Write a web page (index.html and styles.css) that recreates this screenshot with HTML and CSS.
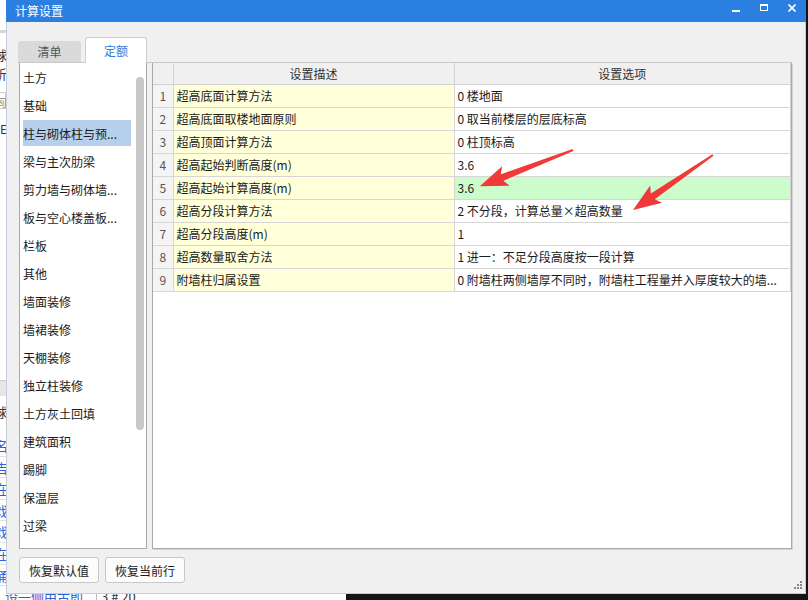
FILE: index.html
```html
<!DOCTYPE html>
<html>
<head>
<meta charset="utf-8">
<title>计算设置</title>
<link rel="stylesheet" href="styles.css">
</head>
<body>
<div class="desktop">
  <div class="bg-left">
    <div class="bgl-band"></div>
    <div class="bgl-txt t1">殏</div>
    <div class="bgl-txt t2">析</div>
    <div class="bgl-box">匈</div>
    <div class="bgl-txt t3">E</div>
    <div class="bgl-band b2"></div>
    <div class="bgl-txt t4">殏</div>
    <div class="bgl-blue">
      <div>名</div><div>吉</div><div>在</div><div>戏</div><div>戏</div><div>在</div><div>俑</div>
    </div>
  </div>
  <div class="bg-bottom">
    <span class="bgb-a">设一侧由古即</span><span class="bgb-b">3 # 20</span>
  </div>

  <div class="dialog">
    <div class="titlebar">
      <span class="title">计算设置</span>
      <div class="controls">
        <svg width="8" height="8" viewBox="0 0 8 8"><rect x="0" y="6" width="8" height="2" fill="#fff"/></svg>
        <svg width="8" height="8" viewBox="0 0 8 8"><rect x="0.5" y="0.5" width="7" height="6" fill="none" stroke="#fff"/><rect x="0" y="0" width="8" height="2" fill="#fff"/></svg>
        <svg width="8" height="8" viewBox="0 0 8 8"><path d="M0.5 0.5 L7.5 7.5 M7.5 0.5 L0.5 7.5" stroke="#fff" stroke-width="1.6"/></svg>
      </div>
    </div>
    <div class="body">
      <div class="tabs">
        <div class="tab">清单</div>
        <div class="tab active">定额</div>
      </div>
      <div class="panel">
        <div class="list">
          <ul>
            <li>土方</li>
            <li>基础</li>
            <li class="sel">柱与砌体柱与预...</li>
            <li>梁与主次肋梁</li>
            <li>剪力墙与砌体墙...</li>
            <li>板与空心楼盖板...</li>
            <li>栏板</li>
            <li>其他</li>
            <li>墙面装修</li>
            <li>墙裙装修</li>
            <li>天棚装修</li>
            <li>独立柱装修</li>
            <li>土方灰土回填</li>
            <li>建筑面积</li>
            <li>踢脚</li>
            <li>保温层</li>
            <li>过梁</li>
            <li>砌体加筋</li>
          </ul>
          <div class="vscroll"><div class="thumb"></div></div>
        </div>
        <div class="grid">
          <table>
            <colgroup><col class="c1"><col class="c2"><col class="c3"></colgroup>
            <thead>
              <tr><th></th><th>设置描述</th><th>设置选项</th></tr>
            </thead>
            <tbody>
              <tr><td class="n">1</td><td class="d">超高底面计算方法</td><td class="o">0 楼地面</td></tr>
              <tr><td class="n">2</td><td class="d">超高底面取楼地面原则</td><td class="o">0 取当前楼层的层底标高</td></tr>
              <tr><td class="n">3</td><td class="d">超高顶面计算方法</td><td class="o">0 柱顶标高</td></tr>
              <tr><td class="n">4</td><td class="d">超高起始判断高度(m)</td><td class="o">3.6</td></tr>
              <tr><td class="n">5</td><td class="d">超高起始计算高度(m)</td><td class="o hl">3.6</td></tr>
              <tr><td class="n">6</td><td class="d">超高分段计算方法</td><td class="o">2 不分段，计算总量×超高数量</td></tr>
              <tr><td class="n">7</td><td class="d">超高分段高度(m)</td><td class="o">1</td></tr>
              <tr><td class="n">8</td><td class="d">超高数量取舍方法</td><td class="o">1 进一：不足分段高度按一段计算</td></tr>
              <tr><td class="n">9</td><td class="d">附墙柱归属设置</td><td class="o">0 附墙柱两侧墙厚不同时，附墙柱工程量并入厚度较大的墙...</td></tr>
            </tbody>
          </table>
        </div>
      </div>
      <div class="buttons">
        <button class="btn">恢复默认值</button>
        <button class="btn">恢复当前行</button>
      </div>
    </div>
    <svg class="grip" width="10" height="10" viewBox="0 0 10 10">
      <rect x="7" y="0" width="2" height="2" fill="#888"/>
      <rect x="4" y="3" width="2" height="2" fill="#888"/>
      <rect x="7" y="3" width="2" height="2" fill="#888"/>
      <rect x="1" y="6" width="2" height="2" fill="#888"/>
      <rect x="4" y="6" width="2" height="2" fill="#888"/>
      <rect x="7" y="6" width="2" height="2" fill="#888"/>
    </svg>
  </div>

  <svg class="arrows" width="808" height="600" viewBox="0 0 808 600">
    <polygon transform="translate(573 150) rotate(158.8)" points="0,-1 76,-3.5 72,-10.5 100,0 72,10.5 76,3.5 0,1" fill="#f03a3a"/>
    <polygon transform="translate(713 155) rotate(145.5)" points="0,-1 73,-3.5 69,-10.5 97,0 69,10.5 73,3.5 0,1" fill="#f03a3a"/>
  </svg>
</div>
</body>
</html>
```

FILE: styles.css
```css
* { box-sizing: border-box; }
body {
  margin: 0;
  font-family: "Noto Sans CJK SC", "Microsoft YaHei", sans-serif;
  font-size: 12px;
  color: #1a1a1a;
}
.desktop {
  position: relative;
  width: 808px;
  height: 600px;
  overflow: hidden;
  background: #141414;
}

/* background application behind the dialog */
.bg-left {
  position: absolute;
  left: 0;
  top: 0;
  width: 8px;
  height: 594px;
  background: #fff;
  overflow: hidden;
}
.bgl-band { position: absolute; left: 0; top: 30px; width: 8px; height: 3px; background: #d6d6d6; }
.bgl-band.b2 { top: 380px; height: 16px; background: #e6e6e6; border-top: 1px solid #ccc; }
.bgl-txt { position: absolute; left: -6px; font-size: 13px; color: #333; }
.t1 { top: 45px; }
.t2 { top: 64px; }
.t3 { top: 120px; left: 0; font-size: 12px; }
.t4 { top: 402px; }
.bgl-box { position: absolute; left: -6px; top: 92px; width: 12px; height: 17px; border: 1px solid #ccc; font-size: 12px; color: #999; }
.bgl-blue { position: absolute; left: -5px; top: 435px; color: #2a62d8; font-size: 13px; }
.bgl-blue div { height: 21.6px; line-height: 21px; border-bottom: 1px solid #e0e0e0; }

.bg-bottom {
  position: absolute;
  left: 0;
  top: 593px;
  width: 346px;
  height: 7px;
  background: #fff;
  overflow: hidden;
}
.bgb-a { position: absolute; left: 5px; top: -6px; font-size: 13px; color: #2a62d8; }
.bgb-b { position: absolute; left: 96px; top: -6px; font-size: 13px; color: #333; border-left: 1px solid #bbb; padding-left: 4px; }

/* dialog window */
.dialog {
  position: absolute;
  left: 6px;
  top: 0;
  width: 800px;
  height: 594px;
  background: #f0f0f0;
  border: 1px solid #c6cedc;
  border-top: none;
  display: flex;
  flex-direction: column;
}
.titlebar {
  height: 22px;
  margin: 0 -1px;
  background: #2b7fe0;
  color: #fff;
  display: flex;
  align-items: center;
  padding-left: 9px;
  flex: none;
}
.title { font-size: 12px; line-height: 1; }
.controls {
  margin-left: auto;
  align-self: flex-start;
  padding-top: 4px;
  padding-right: 10px;
  display: flex;
  gap: 20px;
}
.controls svg { display: block; }

.body {
  flex: 1;
  padding: 15px 13px 0 11px;
  display: flex;
  flex-direction: column;
}
.tabs {
  height: 25px;
  display: flex;
  align-items: flex-end;
  gap: 4px;
  flex: none;
}
.tab {
  width: 63px;
  height: 21px;
  background: #dadada;
  color: #555;
  border-radius: 3px 3px 0 0;
  display: flex;
  align-items: center;
  justify-content: center;
}
.tab.active {
  width: 62px;
  height: 26px;
  margin-bottom: -1px;
  background: #fff;
  color: #2b7fe0;
  border: 1px solid #cdcdcd;
  border-bottom: none;
  position: relative;
  z-index: 1;
}

.panel {
  height: 487px;
  flex: none;
  display: flex;
  gap: 5px;
  border-top: 1px solid #c8c8c8;
  padding-left: 1px;
}
.list {
  width: 128px;
  flex: none;
  background: #fff;
  border: 1px solid #a9a9a9;
  border-top: none;
  display: flex;
  overflow: hidden;
}
.list ul {
  list-style: none;
  margin: 0;
  padding: 0 0 0 1px;
  width: 115px;
  flex: none;
}
.list li {
  width: 110px;
  height: 28px;
  padding: 1px 0 1px 2px;
  display: flex;
  align-items: center;
  white-space: nowrap;
  overflow: hidden;
  color: #1a1a1a;
}
.list li.sel {
  background: #b5cfec;
  background-clip: content-box;
}
.vscroll {
  width: 8px;
  flex: none;
  margin-left: 1px;
  padding-top: 14px;
}
.thumb {
  width: 8px;
  height: 353px;
  border-radius: 4px;
  background: #c8c8c8;
}

.grid {
  flex: 1;
  background: #fff;
  border: 1px solid #a9a9a9;
  border-top: none;
  box-shadow: 1px 1px 0 #d4d4d4;
  overflow: hidden;
}
.grid table {
  width: 100%;
  border-collapse: collapse;
  table-layout: fixed;
}
.c1 { width: 20px; }
.c2 { width: 281px; }
.grid th {
  height: 21px;
  padding: 0;
  background: #f0f0f0;
  font-weight: normal;
  color: #333;
  border: 1px solid #d2d2d2;
  border-top: none;
}
.grid th:first-child { border-left: none; }
.grid td {
  height: 23px;
  padding: 0 0 0 3px;
  border: 1px solid #d6d6d6;
  white-space: nowrap;
  overflow: hidden;
}
.grid td:first-child { border-left: none; }
.grid td.n {
  padding: 0;
  text-align: center;
  color: #555;
  background: #f4f4f4;
}
.grid td.d { background: #ffffda; }
.grid td.o { background: #fff; }
.grid td.o.hl { background: #ccfccc; }

.buttons {
  margin-top: 8px;
  display: flex;
  gap: 6px;
  padding-left: 1px;
}
.btn {
  width: 80px;
  height: 26px;
  background: #fcfcfc;
  border: 1px solid #c8c8c8;
  border-radius: 3px;
  font-family: "Noto Sans CJK SC", sans-serif;
  font-size: 12px;
  color: #1a1a1a;
  padding: 0;
}

.grip {
  position: absolute;
  right: 2px;
  bottom: 2px;
}
.arrows {
  position: absolute;
  left: 0;
  top: 0;
  pointer-events: none;
}
```
